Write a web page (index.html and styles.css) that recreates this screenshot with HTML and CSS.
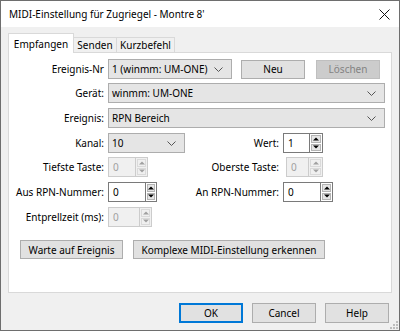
FILE: index.html
```html
<!DOCTYPE html>
<html lang="de">
<head>
<meta charset="utf-8">
<title>MIDI-Einstellung</title>
<link rel="stylesheet" href="styles.css">
</head>
<body>
<div class="window">
  <div class="titlebar">
    <span class="title">MIDI-Einstellung für Zugriegel - Montre 8'</span>
    <svg class="close" width="11" height="11" viewBox="0 0 11 11"><path d="M0.5 0.5 L10.5 10.5 M10.5 0.5 L0.5 10.5" stroke="#111" stroke-width="1" fill="none"/></svg>
  </div>
  <div class="content">
    <div class="tabs">
      <div class="tab active">Empfangen</div>
      <div class="tab t-senden">Senden</div>
      <div class="tab t-kurz">Kurzbefehl</div>
    </div>
    <div class="panel">
      <div class="row tight">
        <span class="lbl">Ereignis-Nr</span>
        <div class="combo w-nr"><span>1 (winmm: UM-ONE)</span><svg class="chev" width="9" height="5" viewBox="0 0 9 5"><path d="M0.5 0.5 L4.5 4.5 L8.5 0.5" stroke="#555" fill="none"/></svg></div>
        <button class="btn b-neu">Neu</button>
        <button class="btn disabled b-del">Löschen</button>
      </div>
      <div class="row">
        <span class="lbl">Gerät:</span>
        <div class="combo w-full"><span>winmm: UM-ONE</span><svg class="chev" width="9" height="5" viewBox="0 0 9 5"><path d="M0.5 0.5 L4.5 4.5 L8.5 0.5" stroke="#555" fill="none"/></svg></div>
      </div>
      <div class="row">
        <span class="lbl">Ereignis:</span>
        <div class="combo w-full"><span>RPN Bereich</span><svg class="chev" width="9" height="5" viewBox="0 0 9 5"><path d="M0.5 0.5 L4.5 4.5 L8.5 0.5" stroke="#555" fill="none"/></svg></div>
      </div>
      <div class="row tight">
        <span class="lbl">Kanal:</span>
        <div class="cell">
          <div class="combo w-kanal"><span>10</span><svg class="chev" width="9" height="5" viewBox="0 0 9 5"><path d="M0.5 0.5 L4.5 4.5 L8.5 0.5" stroke="#555" fill="none"/></svg></div>
        </div>
        <span class="lbl-r">Wert:</span>
        <div class="spin"><div class="spin-in w26">1</div><div class="spin-btns w14"><span class="up"></span><span class="dn"></span></div></div>
      </div>
      <div class="row">
        <span class="lbl">Tiefste Taste:</span>
        <div class="cell">
          <div class="spin off"><div class="spin-in w27">0</div><div class="spin-btns w13"><span class="up"></span><span class="dn"></span></div></div>
        </div>
        <span class="lbl-r">Oberste Taste:</span>
        <div class="spin off shift"><div class="spin-in w22">0</div><div class="spin-btns w15"><span class="up"></span><span class="dn"></span></div></div>
      </div>
      <div class="row">
        <span class="lbl">Aus RPN-Nummer:</span>
        <div class="cell">
          <div class="spin"><div class="spin-in w37">0</div><div class="spin-btns w12"><span class="up"></span><span class="dn"></span></div></div>
        </div>
        <span class="lbl-r">An RPN-Nummer:</span>
        <div class="spin"><div class="spin-in w37">0</div><div class="spin-btns w13"><span class="up"></span><span class="dn"></span></div></div>
      </div>
      <div class="row">
        <span class="lbl">Entprellzeit (ms):</span>
        <div class="spin off"><div class="spin-in w31">0</div><div class="spin-btns w13"><span class="up"></span><span class="dn"></span></div></div>
      </div>
      <div class="actions">
        <button class="btn b-warte">Warte auf Ereignis</button>
        <button class="btn b-komplex">Komplexe MIDI-Einstellung erkennen</button>
      </div>
    </div>
    <div class="footer">
      <button class="btn default">OK</button>
      <button class="btn">Cancel</button>
      <button class="btn">Help</button>
    </div>
  </div>
  <svg class="grip" width="8" height="8" viewBox="0 0 8 8">
    <rect x="6" y="0" width="2" height="2" fill="#bdbdbd"/>
    <rect x="3" y="3" width="2" height="2" fill="#bdbdbd"/>
    <rect x="6" y="3" width="2" height="2" fill="#bdbdbd"/>
    <rect x="0" y="6" width="2" height="2" fill="#bdbdbd"/>
    <rect x="3" y="6" width="2" height="2" fill="#bdbdbd"/>
    <rect x="6" y="6" width="2" height="2" fill="#bdbdbd"/>
  </svg>
</div>
</body>
</html>
```

FILE: styles.css
```css
* { box-sizing: border-box; }
html, body { margin: 0; padding: 0; background: #f0f0f0; }
body {
  font-family: "Noto Sans", "Open Sans", sans-serif;
  font-size: 10px;
  color: #000;
}
.window {
  position: relative;
  width: 400px;
  height: 331px;
  border: 1px solid #6e6e6e;
  background: #f0f0f0;
  display: flex;
  flex-direction: column;
}
.titlebar {
  height: 26px;
  background: #fff;
  display: flex;
  align-items: center;
  padding-left: 8px;
  padding-right: 9px;
  flex: none;
  font-size: 10px;
}
.title { white-space: nowrap; }
.close { margin-left: auto; }
.content {
  padding: 6px 7px 0 7px;
}
.tabs {
  display: flex;
  align-items: flex-end;
  height: 19px;
}
.tab {
  height: 15px;
  border: 1px solid #d9d9d9;
  border-bottom: none;
  background: #f0f0f0;
  display: flex;
  align-items: center;
  justify-content: center;
  line-height: 1;
  margin-left: -1px;
  white-space: nowrap;
}
.tab.active {
  height: 20px;
  width: 66px;
  background: #fff;
  margin-left: 0;
  margin-bottom: -1px;
  position: relative;
  z-index: 1;
}
.t-senden { width: 44px; }
.t-kurz { width: 59px; }
.panel {
  background: #fff;
  border: 1px solid #d9d9d9;
  width: 384px;
  height: 241px;
  padding: 6px 0 0 0;
}
.row {
  display: flex;
  align-items: center;
  height: 20px;
  margin-bottom: 5px;
}
.row.tight { margin-bottom: 4px; }
.lbl {
  width: 95px;
  text-align: right;
  margin-right: 4px;
  white-space: nowrap;
}
.lbl-r {
  width: 89px;
  text-align: right;
  margin-right: 4px;
  white-space: nowrap;
}
.cell { width: 82px; display: flex; }
.combo {
  height: 20px;
  background: #e5e5e5;
  border: 1px solid #adadad;
  display: flex;
  align-items: center;
  padding-left: 3px;
  padding-right: 8px;
  white-space: nowrap;
}
.combo .chev { margin-left: auto; }
.w-nr { width: 124px; }
.w-full { width: 277px; }
.w-kanal { width: 77px; }
.btn {
  font: inherit;
  color: #000;
  height: 19px;
  background: #e1e1e1;
  border: 1px solid #adadad;
  padding: 0;
  line-height: 1;
  white-space: nowrap;
}
.btn.disabled {
  background: #cccccc;
  border-color: #bfbfbf;
  color: #838383;
}
.b-neu { width: 64px; margin-left: 9px; }
.b-del { width: 64px; margin-left: 11px; }
.spin { display: flex; height: 20px; }
.spin.shift { margin-left: 3px; }
.spin-in {
  border: 1px solid #7a7a7a;
  border-right: none;
  background: #fff;
  padding-left: 4px;
  display: flex;
  align-items: center;
}
.spin-btns {
  border: 1px solid #7a7a7a;
  background: #fff;
  display: flex;
  flex-direction: column;
  padding: 1px;
  gap: 1px;
}
.spin-btns span {
  flex: 1;
  background: #e5e5e5;
  border: 1px solid #b4b4b4;
  position: relative;
}
.spin-btns .up::after,
.spin-btns .dn::after {
  content: "";
  position: absolute;
  left: 50%;
  top: 50%;
  transform: translate(-50%, -50%);
  border-left: 3px solid transparent;
  border-right: 3px solid transparent;
}
.spin-btns .up::after { border-bottom: 3px solid #000; }
.spin-btns .dn::after { border-top: 3px solid #000; }
.spin.off .spin-in {
  background: #f0f0f0;
  border-color: #cccccc;
  color: #a0a0a0;
}
.spin.off .spin-btns { background: #f0f0f0; border-color: #cccccc; }
.spin.off .spin-btns span { background: #f0f0f0; border-color: #dadada; }
.spin.off .up::after { border-bottom-color: #a0a0a0; }
.spin.off .dn::after { border-top-color: #a0a0a0; }
.w22 { width: 22px; }
.w26 { width: 26px; }
.w27 { width: 27px; }
.w31 { width: 31px; }
.w37 { width: 37px; }
.w12 { width: 12px; }
.w13 { width: 13px; }
.w14 { width: 14px; }
.w15 { width: 15px; }
.actions {
  display: flex;
  gap: 10px;
  margin-top: 13px;
  padding-left: 11px;
}
.b-warte { width: 103px; }
.b-komplex { width: 192px; }
.footer {
  display: flex;
  justify-content: flex-end;
  gap: 9px;
  margin-top: 10px;
  padding-right: 3px;
}
.footer .btn { width: 64px; height: 20px; }
.btn.default {
  border-color: #0078d7;
  box-shadow: inset 0 0 0 1px #0078d7;
}
.grip { position: absolute; right: 1px; bottom: 1px; }
```
